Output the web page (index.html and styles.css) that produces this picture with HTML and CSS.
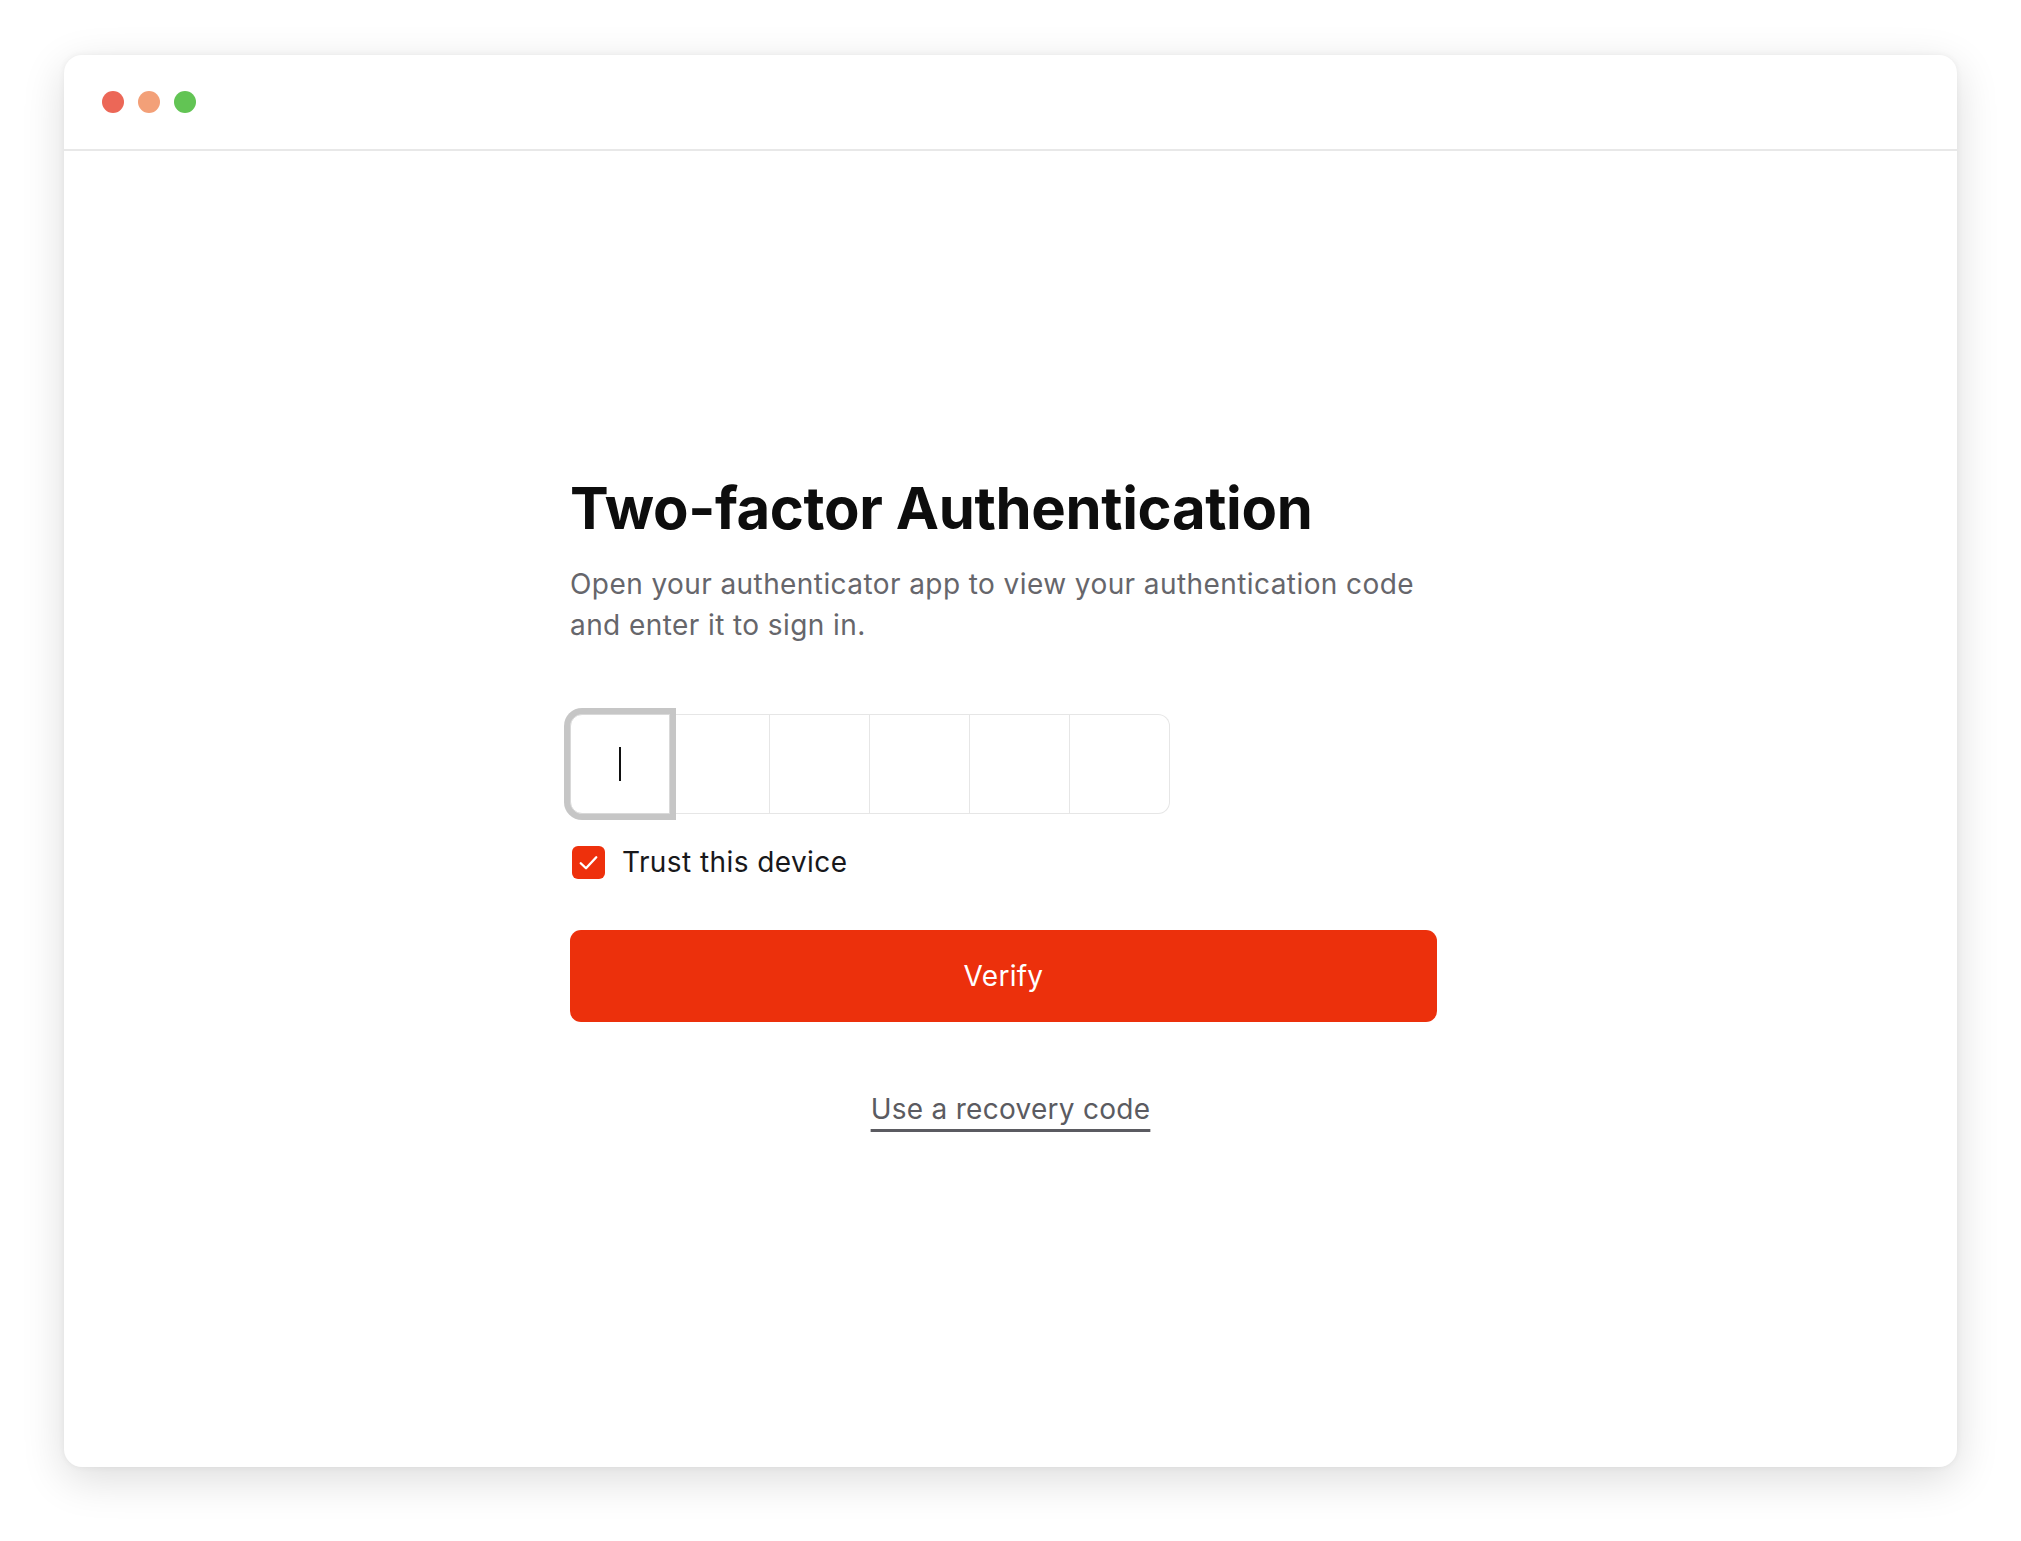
FILE: index.html
```html
<!DOCTYPE html>
<html lang="en">
<head>
<meta charset="utf-8">
<title>Two-factor Authentication</title>
<link rel="stylesheet" href="styles.css">
</head>
<body>
<div class="window">
  <div class="titlebar">
    <span class="dot dot-red"></span>
    <span class="dot dot-orange"></span>
    <span class="dot dot-green"></span>
  </div>
  <main class="content">
    <h1 class="title">Two-factor Authentication</h1>
    <p class="subtitle">Open your authenticator app to view your authentication code and enter it to sign in.</p>
    <div class="otp">
      <div class="otp-cell is-focused"><span class="caret"></span></div>
      <div class="otp-cell"></div>
      <div class="otp-cell"></div>
      <div class="otp-cell"></div>
      <div class="otp-cell"></div>
      <div class="otp-cell"></div>
    </div>
    <label class="trust">
      <span class="checkbox">
        <svg viewBox="0 0 20 20"><polyline points="3.8,10.6 8,14.6 16.2,5.8" fill="none" stroke="#fff" stroke-width="1.9" stroke-linecap="round" stroke-linejoin="round"/></svg>
      </span>
      <span class="trust-label">Trust this device</span>
    </label>
    <button class="verify">Verify</button>
    <div class="recovery-row"><a class="recovery" href="#">Use a recovery code</a></div>
  </main>
</div>
</body>
</html>
```

FILE: styles.css
```css
* { box-sizing: border-box; }
html, body { margin: 0; padding: 0; background: #ffffff; }
body {
  padding: 55px 64px 74px 64px;
  font-family: Inter, "Noto Sans", sans-serif;
}
.window {
  height: 1412px;
  background: #fff;
  border-radius: 18px;
  box-shadow: 0 12px 44px rgba(0, 0, 0, 0.14), 0 0 6px rgba(0, 0, 0, 0.06);
  overflow: hidden;
}
.titlebar {
  height: 96px;
  border-bottom: 2px solid #e8e8e8;
  display: flex;
  align-items: center;
  gap: 14px;
  padding: 0 0 0 38px;
}
.dot { width: 22px; height: 22px; border-radius: 50%; display: block; }
.dot-red { background: #ec6757; }
.dot-orange { background: #f3a078; }
.dot-green { background: #62c454; }

.content {
  width: 867px;
  margin-left: 506px;
  padding-top: 322px;
}
.title {
  margin: 0;
  font-size: 58px;
  line-height: 70px;
  font-weight: 700;
  letter-spacing: -0.006em;
  color: #0d0d0d;
}
.subtitle {
  margin: 21px 0 0 0;
  font-size: 28px;
  line-height: 41px;
  letter-spacing: 0.015em;
  color: #66666b;
  max-width: 860px;
}
.otp {
  margin-top: 68px;
  display: flex;
  width: 601px;
}
.otp-cell {
  width: 100px;
  height: 100px;
  border: 1px solid #e6e6e6;
  border-left: none;
  display: flex;
  align-items: center;
  justify-content: center;
  background: #fff;
}
.otp-cell:first-child {
  border-left: 1px solid #e6e6e6;
  border-radius: 12px 0 0 12px;
}
.otp-cell:last-child { border-radius: 0 12px 12px 0; }
.otp-cell.is-focused {
  position: relative;
  border: 1px solid #d9d9d9;
  box-shadow: 0 0 0 6px #c6c6c6;
  z-index: 1;
}
.caret {
  display: block;
  width: 2px;
  height: 34px;
  background: #111;
}
.trust {
  margin-top: 31px;
  display: flex;
  align-items: center;
  gap: 17px;
  margin-left: 2px;
}
.checkbox {
  width: 33px;
  height: 33px;
  border-radius: 6px;
  background: #ee300c;
  display: flex;
  align-items: center;
  justify-content: center;
}
.checkbox svg { width: 25px; height: 25px; display: block; }
.trust-label {
  font-size: 28px;
  color: #18181b;
  letter-spacing: 0.015em;
}
.verify {
  display: block;
  margin-top: 51px;
  width: 867px;
  height: 92px;
  border: none;
  border-radius: 11px;
  background: #ec300c;
  color: #fff;
  font-family: Inter, "Noto Sans", sans-serif;
  font-size: 28px;
  font-weight: 400;
  letter-spacing: 0.01em;
}
.recovery-row {
  display: flex;
  justify-content: center;
  margin-top: 70px;
  padding-left: 14px;
}
.recovery {
  font-size: 28px;
  letter-spacing: 0.01em;
  color: #5b5b61;
  text-decoration: underline;
  text-decoration-thickness: 3px;
  text-underline-offset: 10px;
}
```
